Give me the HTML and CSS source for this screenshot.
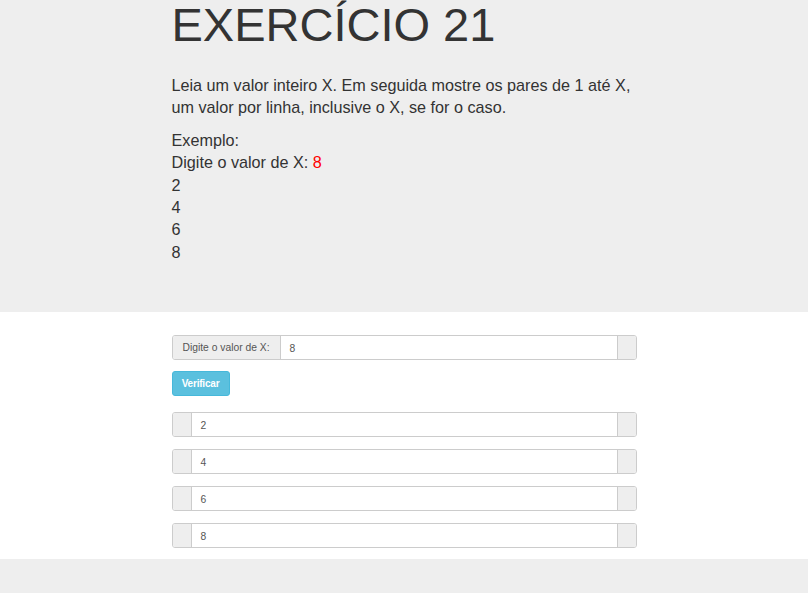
FILE: index.html
```html
<!DOCTYPE html>
<html lang="pt">
<head>
<meta charset="utf-8">
<title>Exercício 21</title>
<link rel="stylesheet" href="styles.css">
</head>
<body>
<section class="hero">
  <div class="container">
    <h1 class="title">EXERCÍCIO 21</h1>
    <p class="lead">Leia um valor inteiro X. Em seguida mostre os pares de 1 até X, um valor por linha, inclusive o X, se for o caso.</p>
    <p class="example">Exemplo:<br>Digite o valor de X: <span class="red">8</span><br>2<br>4<br>6<br>8</p>
  </div>
</section>
<section class="panel">
  <div class="container">
    <div class="group">
      <span class="addon label">Digite o valor de X:</span>
      <span class="field">8</span>
      <span class="addon empty"></span>
    </div>
    <button class="btn">Verificar</button>
    <div class="results">
      <div class="group"><span class="addon empty"></span><span class="field">2</span><span class="addon empty"></span></div>
      <div class="group"><span class="addon empty"></span><span class="field">4</span><span class="addon empty"></span></div>
      <div class="group"><span class="addon empty"></span><span class="field">6</span><span class="addon empty"></span></div>
      <div class="group"><span class="addon empty"></span><span class="field">8</span><span class="addon empty"></span></div>
    </div>
  </div>
</section>
</body>
</html>
```

FILE: styles.css
```css
html, body {
  margin: 0;
  padding: 0;
}
body {
  background: #eeeeee;
  font-family: "Liberation Sans", Arial, sans-serif;
  color: #333333;
}
.container {
  width: 465px;
  margin: 0 auto;
}
.hero {
  background: #eeeeee;
  height: 312px;
  box-sizing: border-box;
  padding-top: 1px;
}
.title {
  margin: 0;
  font-size: 47px;
  line-height: 47px;
  font-weight: normal;
  color: #333333;
}
.lead, .example {
  font-size: 16.2px;
  line-height: 22.4px;
  margin: 0;
}
.lead {
  margin-top: 26px;
}
.example {
  margin-top: 10px;
}
.red {
  color: #ff0000;
}
.panel {
  background: #ffffff;
  padding: 23px 0 11px;
}
.group {
  display: flex;
  height: 25px;
  border: 1px solid #cccccc;
  border-radius: 3px;
  box-sizing: border-box;
  font-size: 10.3px;
  overflow: hidden;
}
.addon {
  background: #eeeeee;
  color: #555555;
  display: flex;
  align-items: center;
}
.label {
  padding: 0 10px;
  border-right: 1px solid #cccccc;
}
.empty {
  width: 18px;
}
.group .empty:first-child {
  border-right: 1px solid #cccccc;
}
.group .empty:last-child {
  border-left: 1px solid #cccccc;
}
.field {
  flex: 1;
  display: flex;
  align-items: center;
  padding: 1px 9px 0;
  color: #555555;
  background: #ffffff;
}
.btn {
  display: block;
  margin-top: 11px;
  height: 25px;
  width: 58px;
  padding: 0;
  background: #5bc0de;
  border: 1px solid #46b8da;
  border-radius: 3px;
  color: #ffffff;
  font-family: "Liberation Sans", Arial, sans-serif;
  font-weight: bold;
  font-size: 10px;
  letter-spacing: -0.2px;
}
.results {
  margin-top: 16px;
  display: flex;
  flex-direction: column;
  gap: 12px;
}
```
